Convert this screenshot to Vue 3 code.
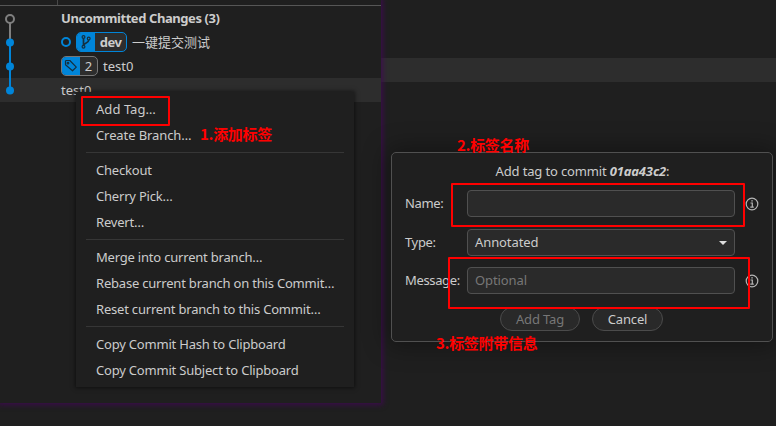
<script setup>
const menuGroups = [
  ['Add Tag…', 'Create Branch…'],
  ['Checkout', 'Cherry Pick…', 'Revert…'],
  [
    'Merge into current branch…',
    'Rebase current branch on this Commit…',
    'Reset current branch to this Commit…'
  ],
  ['Copy Commit Hash to Clipboard', 'Copy Commit Subject to Clipboard']
]
</script>

<template>
  <div class="desktop">
    <div class="stripe"></div>

    <section class="window graph-window">
      <header class="columns"><span class="graph-col"></span></header>
      <div class="history">
        <svg class="graph" width="57" height="96" viewBox="0 0 57 96">
          <path d="M10 12V36" stroke="#808080" stroke-width="2" />
          <path d="M10 36V84" stroke="#0085d9" stroke-width="2" />
          <circle cx="10" cy="13" r="4" fill="#1f1f1f" stroke="#808080" stroke-width="2" />
          <circle cx="10" cy="36.5" r="4" fill="#0085d9" />
          <circle cx="10" cy="60.5" r="4" fill="#0085d9" />
          <circle cx="10" cy="84.5" r="4" fill="#0085d9" />
        </svg>
        <div class="rows">
          <div class="row"><b class="uncommitted">Uncommitted Changes (3)</b></div>
          <div class="row">
            <span class="head-dot"></span>
            <span class="ref head">
              <svg width="18" height="18" viewBox="0 0 18 18" fill="none" stroke="#14303f" stroke-width="1.2">
                <circle cx="6.5" cy="4" r="1.4" /><circle cx="6.5" cy="13.8" r="1.4" /><circle cx="11.7" cy="5.6" r="1.4" />
                <path d="M6.5 5.4v7M11.7 7c0 3.4-4.7 2.4-5.2 5.4" stroke-width="1.7" />
              </svg>
              <b>dev</b>
            </span>
            <span class="subject">一键提交测试</span>
          </div>
          <div class="row">
            <span class="ref tag">
              <svg width="18" height="18" viewBox="0 0 18 18" fill="none" stroke="#14303f" stroke-width="1.2">
                <path d="M3.5 4.2v3.6l7 6 3.8-3.7-6.5-6.6H4.2z" stroke-linejoin="round" /><circle cx="6" cy="6.2" r=".8" />
              </svg>
              <span class="count">2</span>
            </span>
            <span class="subject">test0</span>
          </div>
          <div class="row"><span>test0</span></div>
        </div>
      </div>
    </section>

    <nav class="menu">
      <ul v-for="(group, i) in menuGroups" :key="i">
        <li v-for="item in group" :key="item">{{ item }}</li>
      </ul>
    </nav>

    <section class="dialog">
      <p class="title">Add tag to commit <b>01aa43c2</b>:</p>
      <div class="fields">
        <label>Name:</label>
        <div class="field"></div>
        <svg class="info" viewBox="0 0 14 14"><circle cx="7" cy="7" r="5.8" /><path d="M5.5 6h1.8v4M5.3 10.2h3.5M6.3 3.8h1.5" /></svg>
        <label>Type:</label>
        <div class="field select">Annotated<span class="caret"></span></div>
        <span></span>
        <label>Message:</label>
        <div class="field hint">Optional</div>
        <svg class="info" viewBox="0 0 14 14"><circle cx="7" cy="7" r="5.8" /><path d="M5.5 6h1.8v4M5.3 10.2h3.5M6.3 3.8h1.5" /></svg>
      </div>
      <div class="actions">
        <button class="disabled">Add Tag</button>
        <button class="cancel">Cancel</button>
      </div>
    </section>

    <div class="mark mark-menu"></div>
    <div class="mark mark-name"></div>
    <div class="mark mark-message"></div>
    <span class="note note-1">1.添加标签</span>
    <span class="note note-2">2.标签名称</span>
    <span class="note note-3">3.标签附带信息</span>
  </div>
</template>

<style>
body { background: #1f1f1f; overflow: hidden; }
</style>

<style scoped>
* { box-sizing: border-box; }
.desktop {
  position: relative; width: 776px; height: 426px; overflow: hidden;
  background: #1f1f1f; color: #ccc;
  font: 13px/24px "Noto Sans", "Noto Sans CJK SC", sans-serif;
}
.stripe { position: absolute; left: 381px; right: 0; top: 58px; height: 24px; background: #2d2d2d; }
.window { position: absolute; left: 0; top: 0; }
.graph-window { width: 381px; height: 403px; background: #1f1f1f; box-shadow: 0 0 5px 2px rgba(64, 8, 82, .85); }
.columns { display: flex; height: 6px; border-bottom: 1px solid #565656; }
.graph-col { width: 58px; border-right: 1px solid #484848; }
.history { display: flex; background: linear-gradient(#2d2d2d, #2d2d2d) 0 72px / 100% 24px no-repeat; }
.graph { flex: none; }
.rows { flex: 1; padding-left: 4px; }
.row { display: flex; align-items: center; height: 24px; white-space: nowrap; }
.uncommitted { letter-spacing: -.42px; }
.head-dot { width: 10px; height: 10px; border: 2px solid #0085d9; border-radius: 50%; margin-right: 5px; }
.ref { display: flex; height: 20px; margin-right: 5px; line-height: 18px; border: 1px solid #777; border-radius: 5px; background: #2d2d2d; overflow: hidden; }
.ref svg { flex: none; background: #0085d9; }
.head { width: 51px; border-color: #0085d9; }
.head b { flex: 1; text-align: center; letter-spacing: -.5px; }
.tag { width: 37px; }
.count { flex: 1; text-align: center; }
.menu {
  position: absolute; left: 76px; top: 92px; width: 278px; height: 295px; padding: 4px 10px;
  background: #1f1f1f; box-shadow: 0 0 4px 1px rgba(0, 0, 0, .5); letter-spacing: -.2px;
}
.menu ul { list-style: none; margin: 0; padding: 0; }
.menu ul + ul::before { content: ""; display: block; height: 1px; margin: 4px 0; background: #363636; }
.menu li { height: 26px; padding-left: 10px; line-height: 26px; white-space: nowrap; }
.menu ul:first-child li:first-child { letter-spacing: .05px; }
.menu ul:first-child li:last-child { letter-spacing: -.1px; }
.dialog {
  position: absolute; left: 391px; top: 152px; width: 382px; height: 190px; padding: 6px 12px 0 13px;
  border: 1px solid #505050; border-radius: 5px; background: #1f1f1f;
  box-shadow: 0 0 24px 4px rgba(0, 0, 0, .35);
}
.title { margin: 0 0 7px; text-align: center; height: 24px; letter-spacing: -.15px; }
.title b { font-style: italic; }
.fields { display: grid; grid-template-columns: 62px 268px 24px; grid-template-rows: 39px 38px 27px; align-items: start; }
.fields label { line-height: 27px; letter-spacing: -.35px; }
.field { height: 27px; padding: 0 7px; line-height: 25px; border: 1px solid #505050; border-radius: 4px; background: #2a2a2a; letter-spacing: -.1px; }
.info { width: 14px; height: 14px; margin: 6.5px 0 0 9.5px; fill: none; stroke: #b5b5b5; stroke-width: 1.2; }
.select { display: flex; align-items: center; justify-content: space-between; }
.caret { border: 4px solid transparent; border-top-color: #ddd; border-bottom: 0; }
.hint { color: #777; }
.actions { display: flex; justify-content: center; gap: 12px; margin: 13px 2px 0 0; }
button { height: 24px; padding: 0; border: 1px solid #4b4b4b; border-radius: 12px; background: #292929; color: #ccc; font: inherit; line-height: 22px; letter-spacing: -.15px; }
.disabled { width: 80px; color: #777; }
.cancel { width: 71px; }
.mark { position: absolute; border: 2px solid #f00; border-radius: 1px; }
.mark-menu { left: 81px; top: 96px; width: 89px; height: 30px; }
.mark-name { left: 451px; top: 183px; width: 294px; height: 44px; }
.mark-message { left: 448px; top: 257px; width: 302px; height: 52px; }
.note { position: absolute; color: #f00; font: 700 15px/20px "Noto Sans CJK SC", sans-serif; letter-spacing: -.3px; white-space: nowrap; }
.note-1 { left: 200px; top: 124px; }
.note-2 { left: 457px; top: 135px; }
.note-3 { left: 436px; top: 333px; }
</style>
